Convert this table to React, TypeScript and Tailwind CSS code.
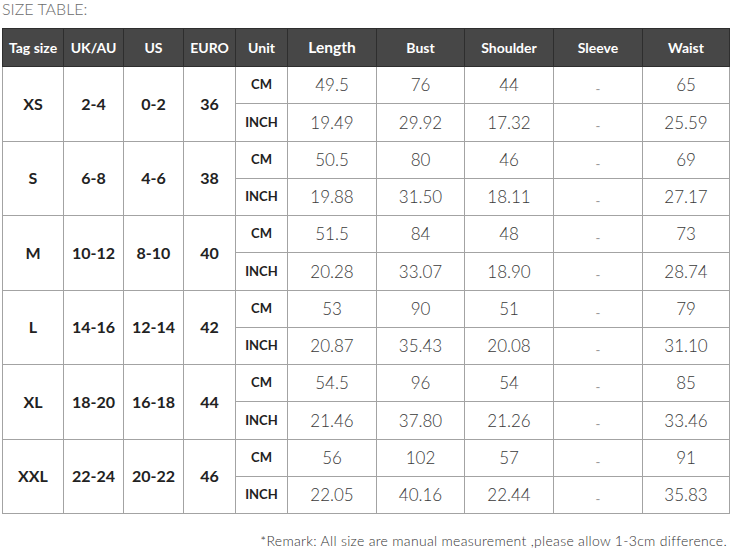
import React from "react";

type Row = {
  tag: string;
  uk: string;
  us: string;
  euro: string;
  cm: string[];
  inch: string[];
};

const rows: Row[] = [
  { tag: "XS", uk: "2-4", us: "0-2", euro: "36", cm: ["49.5", "76", "44", "-", "65"], inch: ["19.49", "29.92", "17.32", "-", "25.59"] },
  { tag: "S", uk: "6-8", us: "4-6", euro: "38", cm: ["50.5", "80", "46", "-", "69"], inch: ["19.88", "31.50", "18.11", "-", "27.17"] },
  { tag: "M", uk: "10-12", us: "8-10", euro: "40", cm: ["51.5", "84", "48", "-", "73"], inch: ["20.28", "33.07", "18.90", "-", "28.74"] },
  { tag: "L", uk: "14-16", us: "12-14", euro: "42", cm: ["53", "90", "51", "-", "79"], inch: ["20.87", "35.43", "20.08", "-", "31.10"] },
  { tag: "XL", uk: "18-20", us: "16-18", euro: "44", cm: ["54.5", "96", "54", "-", "85"], inch: ["21.46", "37.80", "21.26", "-", "33.46"] },
  { tag: "XXL", uk: "22-24", us: "20-22", euro: "46", cm: ["56", "102", "57", "-", "91"], inch: ["22.05", "40.16", "22.44", "-", "35.83"] },
];

const headers = ["Tag size", "UK/AU", "US", "EURO", "Unit", "Length", "Bust", "Shoulder", "Sleeve", "Waist"];
const widths = [61, 60, 60, 52, 52, 89, 88, 89, 89, 87];

const Value: React.FC<{ v: string }> = ({ v }) =>
  v === "-" ? (
    <span className="inline-block translate-y-[3px] text-[13px] text-[#9a9a9a]">-</span>
  ) : (
    <span className="text-[17px] font-light text-[#3a3a3a]">{v}</span>
  );

export default function App() {
  const cell = "border border-[#a3a3a3] text-center align-middle p-0";
  const big = `${cell} text-[16px] font-bold text-[#222]`;
  const unit = `${cell} text-[13px] font-bold text-[#222]`;
  return (
    <div className="w-[731px] h-[554px] bg-white pl-[2px] font-['Lato',sans-serif]">
      <div className="h-[28px] text-[16px] font-light leading-[18px] text-[#6b6b6b]">SIZE TABLE:</div>
      <table className="table-fixed border-collapse w-[727px]">
        <colgroup>
          {widths.map((w, i) => (
            <col key={i} style={{ width: w }} />
          ))}
        </colgroup>
        <thead>
          <tr className="h-[38px] bg-[#474747]">
            {headers.map((h) => (
              <th
                key={h}
                className={`border border-[#2e2e2e] text-center font-bold text-white whitespace-nowrap p-0 ${h === "Length" ? "text-[15.5px]" : "text-[14px]"}`}
              >
                {h}
              </th>
            ))}
          </tr>
        </thead>
        <tbody>
          {rows.map((r) => (
            <React.Fragment key={r.tag}>
              <tr className="h-[37.25px]">
                <td rowSpan={2} className={big}>{r.tag}</td>
                <td rowSpan={2} className={big}>{r.uk}</td>
                <td rowSpan={2} className={big}>{r.us}</td>
                <td rowSpan={2} className={big}>{r.euro}</td>
                <td className={unit}>CM</td>
                {r.cm.map((v, i) => (
                  <td key={i} className={cell}>
                    <Value v={v} />
                  </td>
                ))}
              </tr>
              <tr className="h-[37.25px]">
                <td className={unit}>INCH</td>
                {r.inch.map((v, i) => (
                  <td key={i} className={cell}>
                    <Value v={v} />
                  </td>
                ))}
              </tr>
            </React.Fragment>
          ))}
        </tbody>
      </table>
      <div className="mt-[19px] pr-[4px] text-right text-[14px] font-light tracking-[0.3px] text-[#333] leading-[16px]">
        *Remark: All size are manual measurement ,please allow 1-3cm difference.
      </div>
    </div>
  );
}
